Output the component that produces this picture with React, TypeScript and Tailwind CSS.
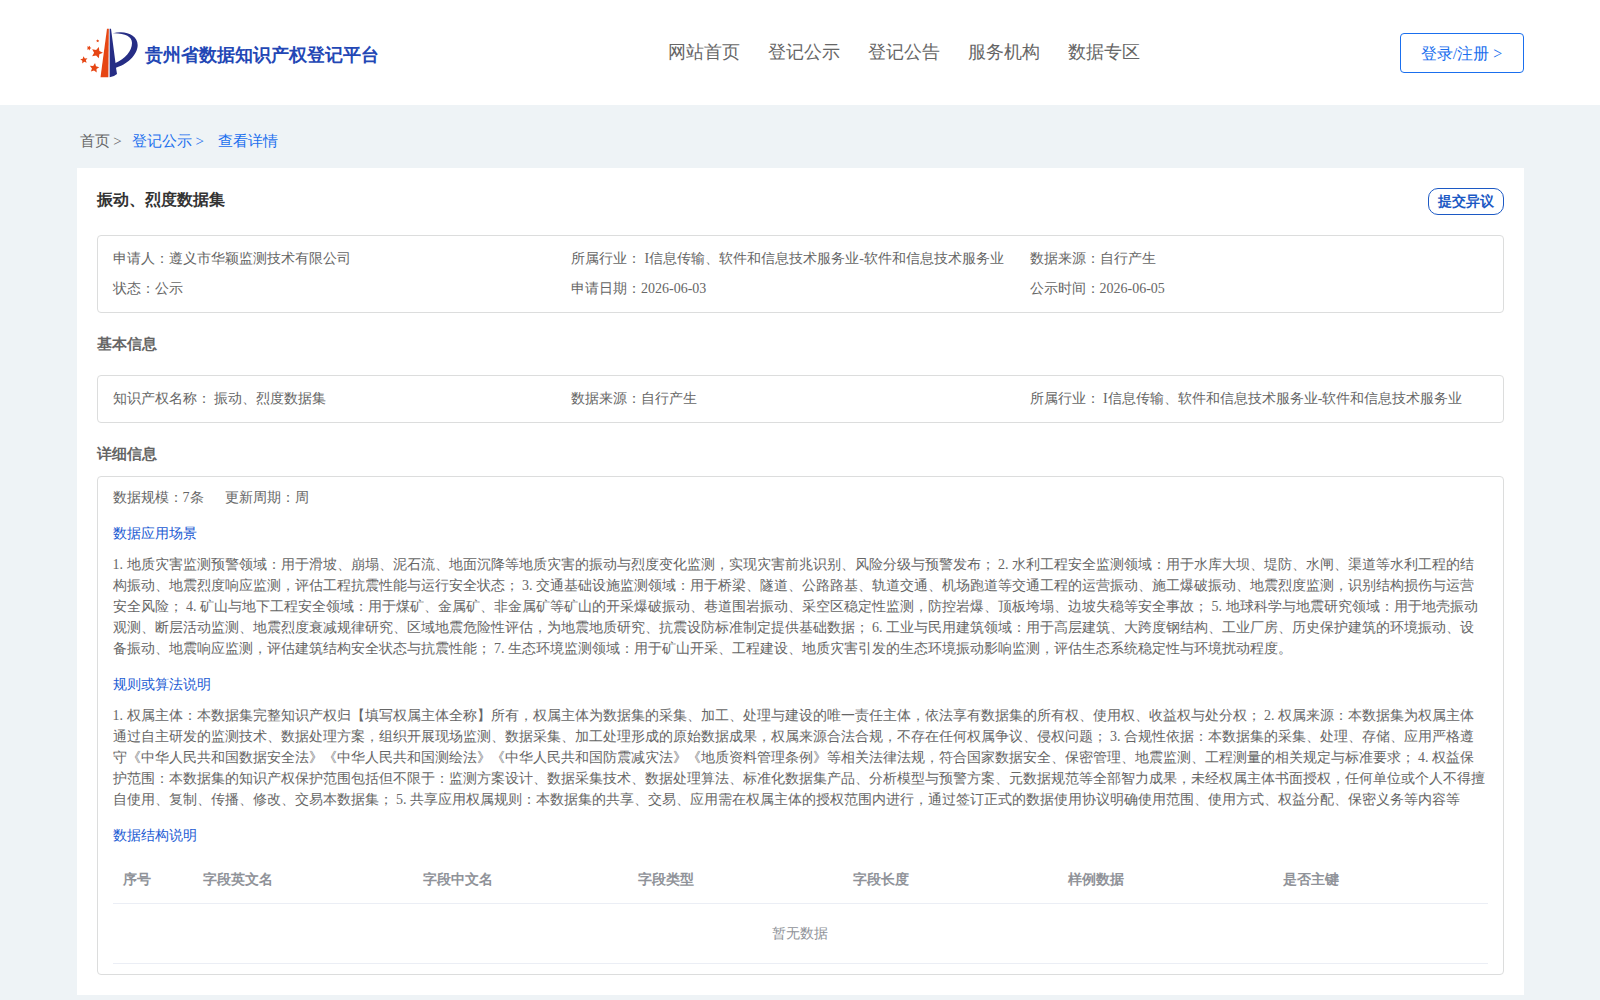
import type { ReactNode } from 'react'

const navItems = ['网站首页', '登记公示', '登记公告', '服务机构', '数据专区']

const industry = '所属行业： I信息传输、软件和信息技术服务业-软件和信息技术服务业'

const scenario =
  '1. 地质灾害监测预警领域：用于滑坡、崩塌、泥石流、地面沉降等地质灾害的振动与烈度变化监测，实现灾害前兆识别、风险分级与预警发布； 2. 水利工程安全监测领域：用于水库大坝、堤防、水闸、渠道等水利工程的结构振动、地震烈度响应监测，评估工程抗震性能与运行安全状态； 3. 交通基础设施监测领域：用于桥梁、隧道、公路路基、轨道交通、机场跑道等交通工程的运营振动、施工爆破振动、地震烈度监测，识别结构损伤与运营安全风险； 4. 矿山与地下工程安全领域：用于煤矿、金属矿、非金属矿等矿山的开采爆破振动、巷道围岩振动、采空区稳定性监测，防控岩爆、顶板垮塌、边坡失稳等安全事故； 5. 地球科学与地震研究领域：用于地壳振动观测、断层活动监测、地震烈度衰减规律研究、区域地震危险性评估，为地震地质研究、抗震设防标准制定提供基础数据； 6. 工业与民用建筑领域：用于高层建筑、大跨度钢结构、工业厂房、历史保护建筑的环境振动、设备振动、地震响应监测，评估建筑结构安全状态与抗震性能； 7. 生态环境监测领域：用于矿山开采、工程建设、地质灾害引发的生态环境振动影响监测，评估生态系统稳定性与环境扰动程度。'

const rules =
  '1. 权属主体：本数据集完整知识产权归【填写权属主体全称】所有，权属主体为数据集的采集、加工、处理与建设的唯一责任主体，依法享有数据集的所有权、使用权、收益权与处分权； 2. 权属来源：本数据集为权属主体通过自主研发的监测技术、数据处理方案，组织开展现场监测、数据采集、加工处理形成的原始数据成果，权属来源合法合规，不存在任何权属争议、侵权问题； 3. 合规性依据：本数据集的采集、处理、存储、应用严格遵守《中华人民共和国数据安全法》《中华人民共和国测绘法》《中华人民共和国防震减灾法》《地质资料管理条例》等相关法律法规，符合国家数据安全、保密管理、地震监测、工程测量的相关规定与标准要求； 4. 权益保护范围：本数据集的知识产权保护范围包括但不限于：监测方案设计、数据采集技术、数据处理算法、标准化数据集产品、分析模型与预警方案、元数据规范等全部智力成果，未经权属主体书面授权，任何单位或个人不得擅自使用、复制、传播、修改、交易本数据集； 5. 共享应用权属规则：本数据集的共享、交易、应用需在权属主体的授权范围内进行，通过签订正式的数据使用协议明确使用范围、使用方式、权益分配、保密义务等内容等'

const columns = ['序号', '字段英文名', '字段中文名', '字段类型', '字段长度', '样例数据', '是否主键']

const stars = [
  { x: 66, y: 92, r: 18, a: 18 },
  { x: 27, y: 114, r: 11.5, a: -8 },
  { x: 58, y: 138, r: 15, a: 8 },
  { x: 42, y: 78, r: 7.5, a: 20 },
  { x: 68, y: 57, r: 5, a: 0 },
]

function starPoints(x: number, y: number, r: number, a: number) {
  return Array.from({ length: 10 }, (_, i) => {
    const radius = i % 2 ? r * 0.48 : r
    const t = ((i * 36 - 90 + a) * Math.PI) / 180
    return `${(x + radius * Math.cos(t)).toFixed(2)},${(y + radius * Math.sin(t)).toFixed(2)}`
  }).join(' ')
}

function Logo() {
  return (
    <svg className="h-[60px] w-[70px] shrink-0" viewBox="0 0 210 180" aria-hidden="true">
      {stars.map((s) => (
        <polygon key={s.x} points={starPoints(s.x, s.y, s.r, s.a)} fill="#e64614" />
      ))}
      <path d="M96 20 H101.500 L100 166 H76.500 Z" fill="#e64614" />
      <path
        d="M104 20 H108 L121.500 123 C150 110 171 88 171 63 C171 44 150 33 113 34 C150 23 188 38 188 69 C188 100 153 129 123 137 L126 156 Q116 165 104 166 Z"
        fill="#262d85"
      />
    </svg>
  )
}

function Box({ className, children }: { className: string; children: ReactNode }) {
  return <div className={`rounded border border-[#dcdddd] px-[15px] ${className}`}>{children}</div>
}

export default function App() {
  return (
    <div className="h-[1000px] w-[1600px] overflow-hidden bg-[#eef3f6] font-['Liberation_Serif',serif] text-sm text-[#666]">
      <header className="flex h-[105px] items-start justify-between bg-white pr-[76.5px] pl-[75px]">
        <div className="flex w-[593px] items-start pt-[22px]">
          <Logo />
          <h1 className="pt-[19px] text-lg font-bold text-[#2347b5]">贵州省数据知识产权登记平台</h1>
        </div>
        <nav className="flex flex-1 gap-7 pt-[38px] text-lg">
          {navItems.map((n) => (
            <a key={n}>{n}</a>
          ))}
        </nav>
        <button className="mt-[33px] h-10 w-[124px] rounded border border-[#1a6fee] pt-[2px] text-base text-[#1a6fee]">登录/注册 &gt;</button>
      </header>

      <div className="flex h-[63px] pt-[25px] pl-[79.5px] text-[15px] leading-[22px]">
        <span>首页 &gt;</span>
        <span className="ml-[10px] text-[#1a6fee]">登记公示 &gt;</span>
        <span className="ml-[14px] text-[#1a6fee]">查看详情</span>
      </div>

      <main className="mx-[76.5px] h-[827px] bg-white p-5">
        <div className="flex h-[47px] items-start justify-between">
          <h2 className="text-base font-bold text-[#333]">振动、烈度数据集</h2>
          <button className="h-[27px] w-[76px] rounded-[10px] border border-[#1c59c4] text-sm font-bold text-[#1c59c4]">提交异议</button>
        </div>

        <Box className="grid h-[78px] grid-cols-[458.5px_458.5px_1fr] content-start pt-2 leading-[30px]">
          <div>申请人：遵义市华颖监测技术有限公司</div>
          <div className="whitespace-nowrap">{industry}</div>
          <div>数据来源：自行产生</div>
          <div>状态：公示</div>
          <div>申请日期：2026-06-03</div>
          <div>公示时间：2026-06-05</div>
        </Box>

        <h3 className="h-[62px] pt-5 text-[15px] leading-[22px] font-bold">基本信息</h3>
        <Box className="grid h-12 grid-cols-[458.5px_458.5px_1fr] content-start pt-2 leading-[30px]">
          <div>知识产权名称： 振动、烈度数据集</div>
          <div>数据来源：自行产生</div>
          <div className="whitespace-nowrap">{industry}</div>
        </Box>

        <h3 className="h-[53px] pt-5 text-[15px] leading-[22px] font-bold">详细信息</h3>
        <Box className="h-[499px] pt-[10px] leading-[21px]">
          <div className="flex gap-[21px]">
            <span>数据规模：7条</span>
            <span>更新周期：周</span>
          </div>
          <h4 className="mt-[15px] text-[#1b5bd3]">数据应用场景</h4>
          <p className="mt-[10px]">{scenario}</p>
          <h4 className="mt-[15px] text-[#1b5bd3]">规则或算法说明</h4>
          <p className="mt-[10px]">{rules}</p>
          <h4 className="mt-[15px] text-[#1b5bd3]">数据结构说明</h4>
          <div className="mt-[9px] grid h-[49px] grid-cols-[80px_220px_repeat(5,215px)] items-center border-b border-[#ebeef5] font-bold text-[#909399]">
            {columns.map((c) => (
              <div key={c} className="pl-[10px]">{c}</div>
            ))}
          </div>
          <div className="flex h-[60px] items-center justify-center border-b border-[#ebeef5] text-[#909399]">暂无数据</div>
        </Box>
      </main>
    </div>
  )
}
